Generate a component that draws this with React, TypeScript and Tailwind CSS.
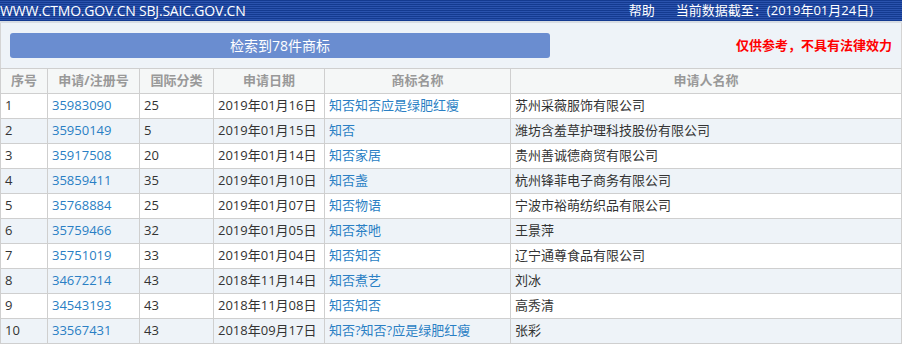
import React from "react"

const rows = [
  ["1", "35983090", "25", "2019年01月16日", "知否知否应是绿肥红瘦", "苏州采薇服饰有限公司"],
  ["2", "35950149", "5", "2019年01月15日", "知否", "潍坊含羞草护理科技股份有限公司"],
  ["3", "35917508", "20", "2019年01月14日", "知否家居", "贵州善诚德商贸有限公司"],
  ["4", "35859411", "35", "2019年01月10日", "知否盏", "杭州锋菲电子商务有限公司"],
  ["5", "35768884", "25", "2019年01月07日", "知否物语", "宁波市裕萌纺织品有限公司"],
  ["6", "35759466", "32", "2019年01月05日", "知否茶吔", "王景萍"],
  ["7", "35751019", "33", "2019年01月04日", "知否知否", "辽宁通尊食品有限公司"],
  ["8", "34672214", "43", "2018年11月14日", "知否煮艺", "刘冰"],
  ["9", "34543193", "43", "2018年11月08日", "知否知否", "高秀清"],
  ["10", "33567431", "43", "2018年09月17日", "知否?知否?应是绿肥红瘦", "张彩"],
]

const heads = ["序号", "申请/注册号", "国际分类", "申请日期", "商标名称", "申请人名称"]
const widths = ["w-[47px]", "w-[92px]", "w-[74px]", "w-[111px]", "w-[186px]", ""]

export default function App() {
  return (
    <div className="w-[902px] h-[344px] overflow-hidden bg-white text-[13px] text-[#333] font-['Open_Sans','Noto_Sans_CJK_SC',sans-serif]">
      {/* top bar */}
      <div className="h-[21px] flex items-center justify-between pr-[29px] text-white text-[14px] leading-none bg-[repeating-linear-gradient(180deg,#143a90_0px,#143a90_1px,#2a52ad_1px,#2a52ad_2px)]">
        <span className="tracking-[-0.2px]">WWW.CTMO.GOV.CN SBJ.SAIC.GOV.CN</span>
        <div className="flex gap-[21px] text-[13px]">
          <span>帮助</span>
          <span>当前数据截至：(2019年01月24日)</span>
        </div>
      </div>
      <div className="h-[2px] bg-[#d8dde3]" />

      {/* search info */}
      <div className="h-[45px] bg-[#eef3f8] border-x border-[#d4d4d4] flex items-center justify-between pl-[9px] pr-[9px]">
        <div className="w-[540px] h-[25px] rounded-[3px] bg-[#6a8dd0] text-white text-[14px] flex items-center justify-center">
          检索到78件商标
        </div>
        <span className="text-[#ff0000] font-bold text-[13px]">仅供参考，不具有法律效力</span>
      </div>

      {/* table */}
      <table className="w-[902px] border-collapse table-fixed">
        <thead>
          <tr className="h-[25px] bg-[#f5f7f7]">
            {heads.map((h, i) => (
              <th key={h} className={`${widths[i]} border border-[#cfcfcf] text-[#999] font-bold text-center p-0`}>
                {h}
              </th>
            ))}
          </tr>
        </thead>
        <tbody>
          {rows.map((r, idx) => (
            <tr key={r[0]} className={`h-[25px] ${idx % 2 === 1 ? "bg-[#eef3f8]" : "bg-white"}`}>
              {r.map((c, i) => (
                <td
                  key={i}
                  className={`border border-[#cfcfcf] px-[4px] py-0 whitespace-nowrap ${
                    i === 1 || i === 4 ? "text-[#2a7fc4]" : "text-[#333]"
                  }`}
                >
                  {c}
                </td>
              ))}
            </tr>
          ))}
        </tbody>
      </table>
    </div>
  )
}
